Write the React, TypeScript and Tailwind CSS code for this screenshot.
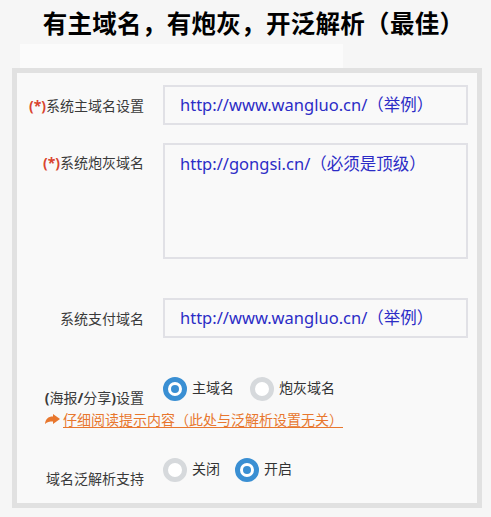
import React from 'react';

const FONT = { fontFamily: '"Noto Sans", "Noto Sans CJK SC", sans-serif' };

// Radio dot, blue when checked, grey ring otherwise
const Radio = ({ checked, label }: { checked: boolean; label: string }) => (
  <div className="flex items-center">
    <span
      className={`flex h-6 w-6 items-center justify-center rounded-full border-[5px] bg-white ${
        checked ? 'border-[#3a8fd3]' : 'border-[#d6d9dc]'
      }`}
    >
      {checked && <span className="h-2 w-2 rounded-full bg-[#3a8fd3]" />}
    </span>
    <span className="ml-[5px] -mt-[3px] text-[14px] leading-none text-[#333]">{label}</span>
  </div>
);

const Label = ({ children, required }: { children: React.ReactNode; required?: boolean }) => (
  <div className="w-[127px] shrink-0 text-right text-[14px] text-[#3a3a3a]">
    {required && <span className="font-bold text-[#d9442f]">(*)</span>}
    {children}
  </div>
);

const Field = ({ value, tall }: { value: string; tall?: boolean }) => (
  <div
    className={`ml-[19px] w-[305px] border-2 border-[#e1e1e6] bg-[#f9f9f9] pl-[15px] text-[16.5px] text-[#2c2cc6] ${
      tall ? 'h-[116px] pt-[7px]' : 'flex h-[40px] items-center'
    }`}
  >
    {value}
  </div>
);

export default function App() {
  return (
    <div className="h-[517px] w-[491px] overflow-hidden bg-[#f6f6f6]" style={FONT}>
      {/* Heading */}
      <div className="flex h-[44px] items-center justify-center pl-[16px] pt-[4px] text-[24.5px] font-bold tracking-[0.3px] text-black">
        有主域名，有炮灰，开泛解析（最佳）
      </div>
      <div className="ml-[20px] h-[24px] w-[323px] bg-[#fbfbfb]" />

      {/* Settings frame */}
      <div className="ml-[12px] h-[440px] w-[470px] border-[5px] border-[#e1e1e1] bg-[#f9f9f9] pt-[12px]">
        <div className="flex items-center">
          <Label required>系统主域名设置</Label>
          <Field value="http://www.wangluo.cn/（举例）" />
        </div>

        <div className="mt-[18px] flex items-start">
          <div className="pt-[9px]">
            <Label required>系统炮灰域名</Label>
          </div>
          <Field value="http://gongsi.cn/（必须是顶级）" tall />
        </div>

        <div className="mt-[39px] flex items-center">
          <Label>系统支付域名</Label>
          <Field value="http://www.wangluo.cn/（举例）" />
        </div>

        <div className="mt-[39px] flex items-start">
          <div className="pt-[10px]">
            <Label>
              <b>(</b>海报<b>/</b>分享<b>)</b>设置
            </Label>
          </div>
          <div className="ml-[19px] flex gap-[16px]">
            <Radio checked label="主域名" />
            <Radio checked={false} label="炮灰域名" />
          </div>
        </div>
        <div className="ml-[28px] mt-[1px] flex items-center text-[14px] text-[#e8772e]">
          <svg width="15" height="11" viewBox="0 0 15 11" className="mr-[3px]">
            <path d="M0 10 C0.5 5 3 2.5 8 2.5 L8 0 L15 5 L8 10 L8 7.5 C4.5 7.5 2 8 0 10 Z" fill="#e8772e" />
          </svg>
          <span className="underline underline-offset-2">仔细阅读提示内容（此处与泛解析设置无关）</span>
        </div>

        <div className="mt-[28px] flex items-start">
          <div className="pt-[10px]">
            <Label>域名泛解析支持</Label>
          </div>
          <div className="ml-[19px] flex gap-[15px]">
            <Radio checked={false} label="关闭" />
            <Radio checked label="开启" />
          </div>
        </div>
      </div>
    </div>
  );
}
